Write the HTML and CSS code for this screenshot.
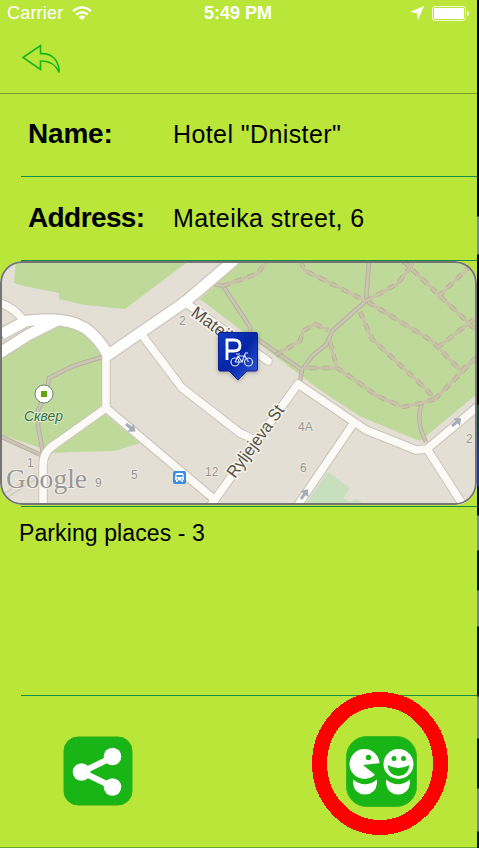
FILE: index.html
```html
<!DOCTYPE html>
<html lang="en">
<head>
<meta charset="utf-8">
<title>Parking details</title>
<link rel="stylesheet" href="styles.css">
</head>
<body>
<div class="desktop">
<main class="phone">
  <header class="status">
    <div class="carrier"><span>Carrier</span>
      <svg width="20" height="15" viewBox="0 0 20 15"><g fill="none" stroke="#fff" stroke-width="2.3"><path d="M1 5.2Q10-2.4 19 5.2"/><path d="M4.2 8.6Q10 3.8 15.8 8.6"/></g><path d="M6.5 10.800Q10 8 13.500 10.800L10 14Z" fill="#fff"/></svg>
    </div>
    <div class="clock">5:49 PM</div>
    <div class="indicators">
      <svg width="14" height="14" viewBox="0 0 14 14"><path d="M14 0L8 14L7 7L0 6Z" fill="#fff"/></svg>
      <svg width="37" height="15" viewBox="0 0 37 15"><rect x=".5" y=".5" width="33" height="14" rx="2.500" fill="none" stroke="#fff" stroke-opacity=".8"/><rect x="2" y="2" width="30" height="11" rx="1" fill="#fff"/><path d="M35 5Q37 5 37 7.500T35 10Z" fill="#fff"/></svg>
    </div>
  </header>
  <nav class="nav">
    <svg width="40" height="32" viewBox="0 0 40 32"><path d="M1 14.500L18.500 2.500V10.700C29 10 37 16 37.200 29.500C33 20 26 17.500 18.500 18V26.500Z" fill="none" stroke="#19b51b" stroke-width="1.600"/></svg>
  </nav>
  <section class="row row-name"><h2>Name:</h2><p>Hotel "Dnister"</p></section>
  <section class="row row-address"><h2>Address:</h2><p>Mateika street, 6</p></section>
  <section class="map-row">
    <div class="map">
    <svg width="477" height="244" viewBox="0 261 477 244" font-family="Liberation Sans, Arial, sans-serif">
      <defs>
        <linearGradient id="pin" x2="1" y2="1"><stop stop-color="#123bc5"/><stop offset=".5" stop-color="#0325a6"/><stop offset="1" stop-color="#3762dd"/></linearGradient>
        <path id="paths" d="M102 357L73 366L49 378L47 390M42 402L38 410V425L43 454M0 436L43 456M211 283L223 286L250 327V334L302 370L312 356L327 344L332 331L366 301L369 261M302 370L300 382M422 403Q415 420 426 442"/>
        <path id="trails" d="M223 286L242 279L257 274L267 261M301 261L304 270L366 301L397 284L415 261M403 261L477 331M438 297L470 266M368 302L432 341L461 371L477 357M437 348L477 317M360 312L372 339L426 389L435 399L422 403L403 407L377 396L355 380L337 368H303M276 355L300 341L303 331L315 324L328 330M330 342L337 368M435 399L477 357"/>
        <path id="streets" d="M0 303Q14 307 24 321M142 335L182 388L240 433L253 439M183 301L268 361M106 355V408L54 445Q43 452 43 466V505M106 408L215 500M211 505L298 384L366 430L416 450L427 449L477 407M353 424L298 505M427 449L463 505"/>
        <path id="avenue" d="M-2 336L26 321Q65 316 85 328Q99 338 108 355L185 302L233 261M-2 354L28 335L56 321"/>
        <path id="arrow" d="M0-1.500H6V-5L12 0L6 5V1.500H0Z"/>
      </defs>
      <rect y="261" width="477" height="244" fill="#e3dfd5"/>
      <g fill="#bed99a">
        <path d="M16 261L14 283L24 286L59 293V299L85 305L125 309L190 260Z"/>
        <path d="M0 358L50 325L72 325Q98 334 106 358V406L46 450L0 434Z"/>
        <path d="M51 453L105 414L140 443L114 451L74 452Z"/>
        <path d="M241 261L200 299L320 390L361 417L420 441L477 394V261Z"/>
      </g>
      <path d="M328 472L350 488L343 498L350 502L356 499L365 505H305Z" fill="#c7dfbd"/>
      <g fill="none">
        <use href="#paths" stroke="#b7ae9b" stroke-width="4.500"/>
        <use href="#paths" stroke="#cbc5b6" stroke-width="2.700"/>
        <use href="#trails" stroke="#cac3a9" stroke-width="3"/>
        <use href="#trails" stroke="#b5aa93" stroke-width="4.500" stroke-dasharray="7 6"/>
        <use href="#trails" stroke="#c9c2a9" stroke-width="3"/>
      </g>
      <g fill="none" stroke-linejoin="round" stroke-linecap="round">
        <use href="#streets" stroke="#ccc4b9" stroke-width="9.500"/>
        <use href="#avenue" stroke="#ccc4b9" stroke-width="13"/>
        <use href="#streets" stroke="#fbfaf6" stroke-width="7.500"/>
        <use href="#avenue" stroke="#fff" stroke-width="10.500"/>
        <path stroke="#ccc4b9" d="M0 345L26 329"/>
        <path stroke="#ccc4b9" stroke-width="6" d="M0 499L35 477"/><path stroke="#dddcd7" stroke-width="4" d="M0 499L35 477"/>
      </g>
      <g fill="#a2adb7"><use href="#arrow" transform="translate(126 424) rotate(38)"/><use href="#arrow" transform="translate(452 426) rotate(-40)"/><use href="#arrow" transform="translate(301 499) rotate(-55)"/><path d="M0-2H3V2H0Z" transform="translate(0 338) rotate(-30)"/></g>
      <g font-size="12" fill="#969591" stroke="#eeeae3" stroke-width="2" paint-order="stroke">
        <text x="179" y="325">2</text><text x="27" y="467">1</text><text x="95" y="487">9</text><text x="131" y="479">5</text><text x="205" y="476">12</text><text x="298" y="431">4A</text><text x="300" y="472">6</text><text x="466" y="443">2</text>
      </g>
      <g font-size="17" fill="#555247" stroke="#f6f3eb" stroke-width="3" paint-order="stroke">
        <text transform="translate(190 315) rotate(36)">Mateika</text><text transform="translate(235 479) rotate(-54)" textLength="85" lengthAdjust="spacingAndGlyphs">Ryljejeva St</text>
      </g>
      <text x="24" y="421" font-size="14" font-style="italic" textLength="39" lengthAdjust="spacingAndGlyphs" fill="#37713a" stroke="#dfecd0" stroke-width="2" paint-order="stroke">Сквер</text>
      <circle cx="44" cy="394" r="9" fill="#fff" stroke="#71836b"/><rect x="41" y="391" width="6" height="6" fill="#61a60b"/>
      <text x="6" y="488" font-family="Liberation Serif, serif" font-size="28" textLength="81" lengthAdjust="spacingAndGlyphs" fill="#999793" stroke="#f1eee9" stroke-width="2" paint-order="stroke">Google</text>
      <g transform="translate(173 471)"><rect width="13" height="13" rx="2" fill="#398ee5"/><path d="M2.500 3Q2.500 2 5 2H8Q10.500 2 10.500 3L11 9H10V11H8.500V9.500H4.500V11H3V9H2Z" fill="#fff"/><path d="M3.500 4H9.500V6H3.500ZM3.500 7.500H5V8.500H3.500ZM8 7.500H9.500V8.500H8Z" fill="#398ee5"/></g>
      <g class="pin"><path d="M220 332.500H256Q257.500 332.500 257.500 334V369Q257.500 371 256 371H247L238 380L229 371H220Q218.500 371 218.500 369V334Q218.500 332.500 220 332.500Z" fill="url(#pin)" stroke="#10218b"/>
      <path d="M227 360V340H234Q240 340 240 345.500T234 351H227" fill="none" stroke="#fff" stroke-width="2.800"/>
      <g fill="none" stroke="#d8e1fa" stroke-width="1.200"><circle cx="235" cy="362" r="4"/><circle cx="248.500" cy="362" r="4"/><path d="M235 362L238 356H245L248.500 362M238 356L242 362H235M242 362L245.500 353H248M236 354H240"/></g></g>
    </svg>
    </div>
  </section>
  <section class="notes">Parking places - 3</section>
  <footer class="actions">
    <svg class="share" width="70" height="70" viewBox="0 0 70 70"><rect x="1" y="1" width="68" height="68" rx="14" fill="#19b516" stroke="#2cac18"/><path d="M51 20.500L19 36L51 51.500" fill="none" stroke="#fff" stroke-width="6"/><g fill="#fff"><circle cx="18.500" cy="36" r="8.800"/><circle cx="49.500" cy="20.500" r="8.800"/><circle cx="49.500" cy="51" r="8.800"/></g></svg>
    <svg class="friends" width="136" height="144" viewBox="312 692 136 144"><ellipse cx="380" cy="763.500" rx="60.500" ry="64" fill="none" stroke="#f00" stroke-width="15" shape-rendering="crispEdges"/><rect x="346.500" y="736.500" width="70" height="70" rx="20" fill="#19b516" stroke="#36bb1b"/><g fill="#fff"><circle cx="364.500" cy="764" r="15"/><circle cx="398.500" cy="764" r="15"/><path d="M353 779.500Q365 789 377 779.500V783Q376 794 365 794.500Q354 794 353 783ZM386 779.500Q398 789 410 779.500V783Q409 794 398 794.500Q387 794 386 783Z"/></g><g fill="#19b516"><path d="M363 765L381 763V770L376 775.500Z"/><circle cx="368.500" cy="757.500" r="2.700"/><circle cx="394" cy="758.500" r="2.500"/><circle cx="403.500" cy="758.500" r="2.500"/><path d="M387.500 765Q398.500 771 409.500 765Q408 776 398.500 776T387.500 765Z"/></g></svg>
  </footer>
</main>
<aside class="edge"></aside>
</div>
</body>
</html>
```
FILE: styles.css
```css
* { box-sizing: border-box; }
body { margin: 0; background: #b9e639; color: #000; font-family: "Liberation Sans", Arial, sans-serif; }
svg { display: block; }
.desktop { display: flex; width: 479px; height: 848px; overflow: hidden; }
.phone { width: 477px; height: 848px; display: flex; flex-direction: column; background: #b9e639; flex: none; border-bottom: 1px solid #67aa29; }
.status { height: 26px; display: grid; grid-template-columns: 1fr auto 1fr; color: #fff; padding: 0 8px 0 7px; align-items: center; font-size: 18px; }
.carrier { display: flex; gap: 9px; align-items: center; letter-spacing: .2px; }
.clock { font-weight: bold; }
.indicators { display: flex; justify-content: flex-end; gap: 8px; align-items: center; }
.nav { height: 68px; padding: 17px 22px; border-bottom: 1px solid #789e2a; }
.row { display: grid; grid-template-columns: 145px 1fr; align-items: center; height: 83px; padding: 0 0 3px 28px; background: linear-gradient(#168b45, #168b45) 21px 100% / 456px 1px no-repeat; }
.row-address { height: 84px; padding-bottom: 2px; }
h2, p { margin: 0; line-height: 32px; }
h2 { font-size: 28px; letter-spacing: -.2px; }
.row-address h2 { letter-spacing: -.6px; }
p { font-size: 25px; letter-spacing: .4px; }
.map-row { height: 246px; background: linear-gradient(#168b45, #168b45) 21px 100% / 456px 1px no-repeat; }
.map { height: 244px; overflow: hidden; border-radius: 22px; position: relative; }
.map::after { content: ""; position: absolute; inset: 0; border: 2px solid #747474; border-radius: 22px; }
.pin { filter: drop-shadow(0 1px 2px #6668); }
.notes { height: 189px; padding: 13px 19px; font-size: 23px; line-height: 26px; letter-spacing: .1px; background: linear-gradient(#168b45, #168b45) 21px 100% / 456px 1px no-repeat; }
.actions { flex: 1; display: flex; justify-content: space-between; padding: 0 29px 0 63px; }
.share { margin-top: 40px; }
.friends { margin-top: -4px; }
.edge { width: 2px; background: linear-gradient(#000 0 216px, #6d8ba5 217px 254px, #000 255px 404px, #173c38 405px 425px, #1938a3 455px 485px, #030927 488px 515px, #6f8ca2 516px 550px, #03161c 551px 590px, #6b8799 591px 626px, #03161c 627px 696px, #6b8799 697px 738px, #03161c 739px 788px, #6b8799 789px 831px, #03161c 832px); }
```
